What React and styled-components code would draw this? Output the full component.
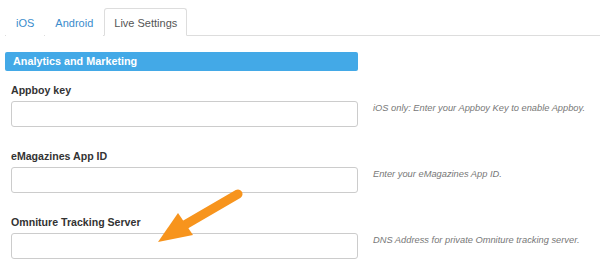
import React from 'react';
import styled, { createGlobalStyle } from 'styled-components';

const GlobalStyle = createGlobalStyle`
  body {
    margin: 0;
    background: #fff;
    font-family: "Liberation Sans", Arial, sans-serif;
    color: #333;
  }
`;

const fields = [
  { label: 'Appboy key', help: 'iOS only: Enter your Appboy Key to enable Appboy.' },
  { label: 'eMagazines App ID', help: 'Enter your eMagazines App ID.' },
  { label: 'Omniture Tracking Server', help: 'DNS Address for private Omniture tracking server.' },
];

export default function App() {
  return (
    <Page>
      <GlobalStyle />
      <TabBar>
        <Tab>iOS</Tab>
        <Tab>Android</Tab>
        <Tab active>Live Settings</Tab>
      </TabBar>
      <Panel>
        <SectionTitle>Analytics and Marketing</SectionTitle>
        <Form>
          {fields.map((f) => (
            <Row key={f.label}>
              <Label>{f.label}</Label>
              <Input type="text" />
              <Help>{f.help}</Help>
            </Row>
          ))}
        </Form>
      </Panel>
      <Arrow width="100" height="64" viewBox="0 0 100 64">
        <line x1="90" y1="6" x2="35" y2="38" stroke="#f7941d" strokeWidth="9" strokeLinecap="round" />
        <polygon points="10,54 30,25 45,47" fill="#f7941d" />
      </Arrow>
    </Page>
  );
}

const Page = styled.div`
  position: relative;
  width: 600px;
  height: 279px;
  overflow: hidden;
  padding-top: 8px;
  box-sizing: border-box;
`;

const TabBar = styled.div`
  display: flex;
  gap: 1px;
  margin-left: 5px;
  padding-left: 1px;
  border-bottom: 1px solid #ddd;
`;

const Tab = styled.div`
  height: 28px;
  padding: 1px 9px 0;
  display: flex;
  align-items: center;
  font-size: 11px;
  box-sizing: border-box;
  margin-bottom: -1px;
  border: 1px solid ${(p) => (p.active ? '#ddd' : 'transparent')};
  border-bottom-color: ${(p) => (p.active ? '#fff' : 'transparent')};
  border-radius: 3px 3px 0 0;
  background: #fff;
  color: ${(p) => (p.active ? '#555' : '#3a8ccc')};
`;

const Panel = styled.div`
  padding: 16px 0 0 5px;
`;

const SectionTitle = styled.div`
  width: 353px;
  height: 19px;
  box-sizing: border-box;
  background: #43a9e7;
  border-radius: 2px;
  color: #fff;
  font-size: 10.8px;
  font-weight: bold;
  line-height: 19px;
  padding-left: 8px;
`;

const Form = styled.div`
  display: flex;
  flex-direction: column;
  gap: 21px;
  padding: 11px 0 0 6px;
`;

const Row = styled.div`
  display: grid;
  grid-template-columns: 347px auto;
  column-gap: 15px;
  row-gap: 3px;
`;

const Label = styled.div`
  grid-column: 1 / 3;
  font-size: 10.6px;
  font-weight: bold;
  line-height: 16px;
  color: #333;
`;

const Input = styled.input`
  height: 26px;
  box-sizing: border-box;
  border: 1px solid #ccc;
  border-radius: 3px;
  background: #fff;
  margin: 0;
  padding: 0 6px;
  outline: none;
`;

const Help = styled.div`
  align-self: start;
  font-size: 9.3px;
  font-style: italic;
  line-height: 14px;
  color: #777;
`;

const Arrow = styled.svg`
  position: absolute;
  left: 148px;
  top: 188px;
`;
